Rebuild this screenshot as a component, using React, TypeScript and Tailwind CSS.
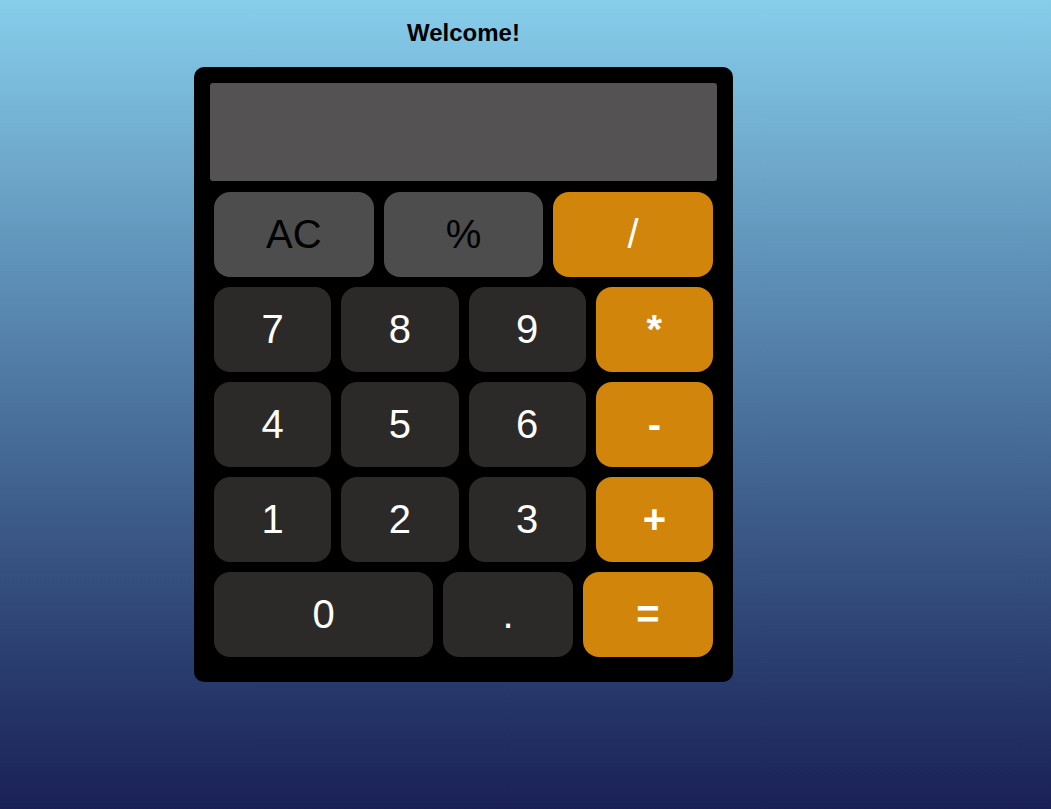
import React, { useState } from "react";

type Key = { label: string; kind: "fn" | "num" | "op" | "opb" };

const rows: Key[][] = [
  [
    { label: "AC", kind: "fn" },
    { label: "%", kind: "fn" },
    { label: "/", kind: "op" },
  ],
  [
    { label: "7", kind: "num" },
    { label: "8", kind: "num" },
    { label: "9", kind: "num" },
    { label: "*", kind: "opb" },
  ],
  [
    { label: "4", kind: "num" },
    { label: "5", kind: "num" },
    { label: "6", kind: "num" },
    { label: "-", kind: "opb" },
  ],
  [
    { label: "1", kind: "num" },
    { label: "2", kind: "num" },
    { label: "3", kind: "num" },
    { label: "+", kind: "opb" },
  ],
  [
    { label: "0", kind: "num" },
    { label: ".", kind: "num" },
    { label: "=", kind: "opb" },
  ],
];

const rowGrid = [
  "grid-cols-3",
  "grid-cols-4",
  "grid-cols-4",
  "grid-cols-4",
  "grid-cols-[219fr_130fr_130fr]",
];

const kindClass = {
  fn: "bg-[#4d4d4d] text-black",
  num: "bg-[#2c2a28] text-white",
  op: "bg-[#d1850a] text-white",
  opb: "bg-[#d1850a] text-white font-bold",
};

const App = () => {
  const [value, setValue] = useState("");

  const press = (label: string) => {
    if (label === "AC") return setValue("");
    if (label === "=") {
      try {
        // eslint-disable-next-line no-new-func
        setValue(String(Function(`return (${value})`)()));
      } catch {
        setValue("Error");
      }
      return;
    }
    setValue((v) => v + label);
  };

  return (
    <div
      className="min-h-screen bg-linear-to-b from-[#87ceeb] to-[#1a2055]"
      style={{ fontFamily: '"Liberation Sans", Arial, sans-serif' }}
    >
      <div className="ml-[194px] w-[539px] pt-[17px]">
        <h1 className="text-center text-[24px] leading-[32px] font-bold text-black">Welcome!</h1>

        <div className="mt-[18px] rounded-[10px] bg-black px-4 pt-4 pb-[25px]">
          {/* Display */}
          <div className="flex h-[98px] items-center justify-end overflow-hidden rounded-[3px] bg-[#545253] px-4 text-[40px] text-white">
            {value}
          </div>

          {/* Keys */}
          <div className="mx-1 mt-[11px] flex flex-col gap-[10px]">
            {rows.map((row, i) => (
              <div key={i} className={`grid gap-[10px] ${rowGrid[i]}`}>
                {row.map((key) => (
                  <button
                    key={key.label}
                    onClick={() => press(key.label)}
                    className={`flex h-[85px] items-center justify-center rounded-[16px] pb-[2px] text-[40px] leading-normal ${kindClass[key.kind]}`}
                  >
                    {key.label}
                  </button>
                ))}
              </div>
            ))}
          </div>
        </div>
      </div>
    </div>
  );
};

export default App;
